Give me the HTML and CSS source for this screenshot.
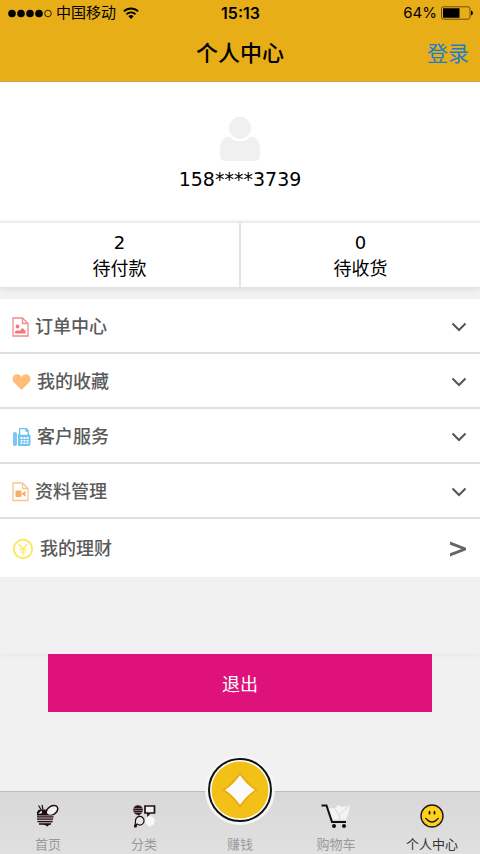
FILE: index.html
```html
<!DOCTYPE html>
<html lang="zh-CN">
<head>
<meta charset="utf-8">
<meta name="viewport" content="width=device-width, initial-scale=1">
<title>个人中心</title>
<link rel="stylesheet" href="styles.css">
</head>
<body>
<div class="app">
  <header class="header">
    <div class="status">
      <div class="status-left">
        <svg width="44" height="9" viewBox="0 0 44 9" aria-hidden="true">
          <circle cx="4" cy="4.5" r="3.8"/><circle cx="13" cy="4.5" r="3.8"/><circle cx="22" cy="4.5" r="3.8"/><circle cx="31" cy="4.5" r="3.8"/>
          <circle cx="40" cy="4.5" r="3.3" fill="none" stroke="#000" stroke-width=".8"/>
        </svg>
        <span>中国移动</span>
        <svg class="wifi" width="16" height="12" viewBox="0 0 16 12" aria-hidden="true">
          <g fill="none" stroke="#000" stroke-width="1.9"><path d="M.9 4.400a10.200 10.200 0 0 1 14.200 0"/><path d="M3.500 7.200a6.400 6.400 0 0 1 9 0"/></g>
          <path d="M8 12 5.400 9.300a3.700 3.700 0 0 1 5.200 0z"/>
        </svg>
      </div>
      <span class="status-time">15:13</span>
      <div class="status-right">
        <span>64%</span>
        <svg width="32" height="14" viewBox="0 0 32 14" aria-hidden="true">
          <rect x=".5" y=".8" width="28.500" height="12.400" rx="2" fill="none" stroke="#6b4a18"/>
          <path d="M2 2.300h16.500v9.400H2zM30 4.500q2 .6 2 2.500t-2 2.500z"/>
        </svg>
      </div>
    </div>
    <div class="titlebar">
      <h1 class="title">个人中心</h1>
      <a class="login" href="#login">登录</a>
    </div>
  </header>

  <main class="main">
    <section class="profile">
      <svg width="40" height="44" viewBox="0 0 40 44" fill="#f0f0f0" aria-hidden="true">
        <circle cx="20" cy="11" r="11"/>
        <path d="M9.500 19.500C3 20 0 25 0 32v6.500Q0 44 5.500 44h29q5.500 0 5.500-5.500V32c0-7-3-12-9.500-12.500C28 22.500 24 24 20 24s-8-1.500-10.500-4.500z"/>
      </svg>
      <p class="phone">158****3739</p>
    </section>

    <section class="stats">
      <a class="stat" href="#unpaid"><span>2</span><span>待付款</span></a>
      <a class="stat" href="#shipping"><span>0</span><span>待收货</span></a>
    </section>

    <nav class="menu">
      <button class="row" type="button">
        <svg width="17" height="20" viewBox="0 0 17 20" aria-hidden="true">
          <path d="M1 1h9.500L16 6.500V19H1zM10.500 1v5.500H16" fill="none" stroke="#f28b8b" stroke-width="1.300"/>
          <circle cx="5.500" cy="9.500" r="1.900" fill="#f27878"/><path d="M3 16.500v-2l3-1.500 1.500 1L10.500 11l3 3v2.500z" fill="#f27878"/>
        </svg>
        <span>订单中心</span>
        <svg class="chevron" width="16" height="10" viewBox="0 0 16 10" aria-hidden="true"><path d="m1.500 1.500 6.500 6.500 6.500-6.500"/></svg>
      </button>
      <button class="row" type="button">
        <svg width="19" height="18" viewBox="0 0 19 18" aria-hidden="true"><path fill="#ffbd78" d="M9.500 17 2 9.600C-.5 7 .4 1.500 5 1.200c2.300 0 3.600 1.300 4.500 3 .9-1.700 2.200-3 4.500-3 4.600.3 5.500 5.800 3 8.400z"/></svg>
        <span>我的收藏</span>
        <svg class="chevron" width="16" height="10" viewBox="0 0 16 10" aria-hidden="true"><path d="m1.500 1.500 6.500 6.500 6.500-6.500"/></svg>
      </button>
      <button class="row" type="button">
        <svg width="19" height="20" viewBox="0 0 19 20" aria-hidden="true">
          <rect x="1" y="5" width="4" height="14" rx="1.800" fill="#7ac8f2"/>
          <path fill="#72c3ef" d="M6 7h1V1h8l2 2.500V7q1.500.5 1.500 2v8q0 2-2 2H6z"/>
          <path fill="#fff" d="M8.300 2.200h5v2.500h2.300v3H8.300zM8.500 10h2v2h-2zm3 0h2v2h-2zm3 0h2v2h-2zm-6 3h2v1.500h-2zm3 0h2v1.500h-2zm3 0h2v1.500h-2zm-6 2.500h2V17h-2zm3 0h2V17h-2zm3 0h2V17h-2z"/>
        </svg>
        <span>客户服务</span>
        <svg class="chevron" width="16" height="10" viewBox="0 0 16 10" aria-hidden="true"><path d="m1.500 1.500 6.500 6.500 6.500-6.500"/></svg>
      </button>
      <button class="row" type="button">
        <svg width="17" height="20" viewBox="0 0 17 20" aria-hidden="true">
          <path d="M1 1h9.500L16 6.500V18.500H1zM10.500 1v5.500H16" fill="none" stroke="#fcc48e" stroke-width="1.300"/>
          <rect x="3.500" y="8.500" width="6" height="6.500" rx="1" fill="#f9ab69"/><path d="m9.500 11.800 4-3v6z" fill="#f9ab69"/>
        </svg>
        <span>资料管理</span>
        <svg class="chevron" width="16" height="10" viewBox="0 0 16 10" aria-hidden="true"><path d="m1.500 1.500 6.500 6.500 6.500-6.500"/></svg>
      </button>
      <a class="row" href="#finance">
        <svg width="22" height="22" viewBox="0 0 22 22" fill="none" stroke="#fae95c" aria-hidden="true">
          <circle cx="11" cy="11" r="9.200" stroke-width="1.900"/>
          <path stroke-width="1.200" d="m6.500 6 4.500 5 4.500-5M11 11v6.500M7.500 11.300h7M7.500 14h7"/>
        </svg>
        <span>我的理财</span>
        <svg class="arrow" width="18" height="16" viewBox="0 0 18 16" aria-hidden="true"><path d="M1 .5 17 6.700v2.600L1 15.500v-3.200L12.500 8 1 3.700z"/></svg>
      </a>
    </nav>

    <div class="spacer"></div>
    <button class="logout" type="button">退出</button>
  </main>

  <nav class="tabs">
    <a class="tab" href="#home">
      <svg width="24" height="24" viewBox="0 0 24 24" aria-hidden="true">
        <path fill="#1c1014" d="M1 12V8q1-2.500 4-2.700L13 6l1 5-3 1z"/>
        <path d="m2.500 1.500 2.500 4M6 1l1 4.500" stroke="#1c1014" stroke-width="1.200" fill="none"/>
        <ellipse cx="16" cy="6.500" rx="6.300" ry="4.200" transform="rotate(-32 16 6.500)" fill="#f3f0f1" stroke="#1c1014" stroke-width="1.500"/>
        <path d="M2.200 9.800 5.500 6.500l.5 2.800z" fill="#fff"/>
        <path d="M1 11.500h16.500l-.5 6-2 2.500-5 .5-1 0H4l-2.500-3z" fill="#cdb9bd"/>
        <path d="M1 12.800h16.500M1 15.200h16M1.500 17.600h15M3 20h12" stroke="#1c1014" stroke-width="1.300"/>
        <path d="M7 20h7l-2.500 2.500z" fill="#1c1014"/>
      </svg>
      <span>首页</span>
    </a>
    <a class="tab" href="#category">
      <svg width="24" height="24" viewBox="0 0 24 24" aria-hidden="true">
        <circle cx="6" cy="6" r="4.800" fill="#2a171c"/><path d="M5 10h3l-1 2z" fill="#2a171c"/><path d="M1.500 4.500h9M1.200 6.500h9.600M2 8.500h8" stroke="#a08c90" stroke-width=".7"/>
        <path d="M13 2h9.500v7H18l-2 2v-2h-3z" fill="#f2eeee" stroke="#1c1014" stroke-width="1.700"/>
        <path d="m5 20-2 2 .5-4.500A4.300 4.300 0 1 1 7 21z" fill="#e8e6e6" stroke="#1c1014" stroke-width="1.200"/><circle cx="3.500" cy="22" r="1.600" fill="#1c1014"/>
        <circle cx="18" cy="17" r="4.800" fill="#f7f7f7"/><path d="m16 21 2 2.500 1-2.500z" fill="#f7f7f7"/>
      </svg>
      <span>分类</span>
    </a>
    <a class="tab" href="#earn">
      <svg class="coin" width="72" height="72" viewBox="0 0 72 72" aria-hidden="true">
        <circle cx="36" cy="36" r="35" fill="#f5f5f5"/>
        <circle cx="36" cy="36" r="31" fill="#fff" stroke="#111" stroke-width="2"/>
        <circle cx="36" cy="36" r="28.500" fill="#f3c017"/>
        <path d="M36 18q7 11 18 18Q43 43 36 54 29 43 18 36 29 29 36 18z" fill="#eda711"/>
        <path d="M36 21q6 9 15 15-9 6-15 15-6-9-15-15 9-6 15-15z" fill="#fafafa"/>
      </svg>
      <span>赚钱</span>
    </a>
    <a class="tab" href="#cart">
      <svg width="30" height="24" viewBox="0 0 30 24" aria-hidden="true">
        <path d="m7 4 7 .5L17 1l4 2 8-1-2 8-2 5.500H12z" fill="#f4f4f4"/><path d="m14 5 4 6 9-8M18 11l1 4" fill="none" stroke="#d8d8d8"/>
        <path d="M.5 1.500h5L11 18h14" fill="none" stroke="#150e10" stroke-width="2"/>
        <circle cx="13" cy="22" r="2" fill="#150e10"/><circle cx="23" cy="22" r="2" fill="#150e10"/>
      </svg>
      <span>购物车</span>
    </a>
    <a class="tab active" href="#me">
      <svg width="24" height="24" viewBox="0 0 24 24" aria-hidden="true">
        <circle cx="12" cy="12" r="11" fill="#fdd21c" stroke="#231815" stroke-width="1.400"/>
        <ellipse cx="9.500" cy="8.800" rx="1" ry="2" fill="#231815"/><ellipse cx="14.500" cy="8.800" rx="1" ry="2" fill="#231815"/>
        <path d="M5.500 14q6.500 8 13 0" fill="none" stroke="#231815" stroke-width="1.300"/>
      </svg>
      <span>个人中心</span>
    </a>
  </nav>
</div>
</body>
</html>
```
FILE: styles.css
```css
* {
  box-sizing: border-box;
}

body {
  margin: 0;
  background: #f1f1f1;
  color: #000;
  font-family: "Liberation Sans", "Noto Sans CJK SC", sans-serif;
}

a {
  color: inherit;
  text-decoration: none;
}

button {
  border: 0;
  margin: 0;
  font: inherit;
}

svg {
  flex: none;
}

.app {
  display: flex;
  flex-direction: column;
  min-height: 100vh;
}

.header {
  background: #e8ae17;
  border-bottom: 1px solid #c9a54a;
}

.status {
  display: grid;
  grid-template-columns: 1fr auto 1fr;
  align-items: center;
  height: 26px;
  padding: 0 7px 0 8px;
  font-family: Inter, "Noto Sans CJK SC", sans-serif;
  font-size: 15px;
  line-height: 20px;
}

.status-left,
.status-right {
  display: flex;
  align-items: center;
  gap: 4px;
}

.wifi {
  margin-left: 3px;
}

.status-right {
  justify-content: flex-end;
}

.status-time {
  font-size: 16px;
  font-weight: 600;
}

.titlebar {
  display: grid;
  grid-template-columns: 1fr auto 1fr;
  align-items: center;
  height: 55px;
  padding: 0 11px;
  font-size: 21px;
  line-height: 30px;
}

.title {
  grid-column: 2;
  margin: 0;
  font-size: 22px;
  font-weight: 500;
}

.login {
  justify-self: end;
  color: #1c7dcd;
}

.main {
  display: flex;
  flex: 1;
  flex-direction: column;
}

.profile {
  display: flex;
  flex-direction: column;
  align-items: center;
  gap: 6px;
  padding: 35px 0 30px;
  background: #fff;
}

.phone {
  margin: 0;
  font-family: "DejaVu Sans", sans-serif;
  font-size: 19px;
  line-height: 24px;
}

.stats {
  display: grid;
  grid-template-columns: 1fr 1fr;
  gap: 2px;
  margin-bottom: 12px;
  border-top: 2px solid #ececec;
  background: #e4e4e4;
  box-shadow: 0 2px 5px #dcdcdc;
}

.stat {
  display: flex;
  flex-direction: column;
  align-items: center;
  padding: 7px 0 5px;
  background: #fff;
  font-family: "DejaVu Sans", "Noto Sans CJK SC", sans-serif;
  font-size: 18px;
  line-height: 26px;
}

.menu {
  background: #fff;
}

.row {
  display: flex;
  align-items: center;
  gap: 6px;
  width: 100%;
  height: 55px;
  padding: 2px 13px 0 12px;
  border-bottom: 2px solid #dfdfdf;
  background: #fff;
  color: #5a5a5a;
  font-size: 18px;
  font-weight: 500;
  line-height: 26px;
  text-align: left;
}

.row:last-child {
  height: 58px;
  border-bottom: 0;
}

.chevron,
.arrow {
  margin-left: auto;
  fill: none;
  stroke: #555;
  stroke-width: 2;
}

.arrow {
  fill: #666;
  stroke: none;
}

.spacer {
  height: 77px;
  box-shadow: 0 2px 4px #e9e9e9;
}

.logout {
  position: relative;
  height: 58px;
  margin: 0 10%;
  background: #de127a;
  color: #fff;
  font-size: 18px;
}

.tabs {
  display: grid;
  grid-template-columns: repeat(5, 1fr);
  height: 63px;
  border-top: 1px solid #bdbdbd;
  background: linear-gradient(#d8d8d8, #e0e0e0);
  color: #999;
  font-size: 13px;
  line-height: 18px;
}

.tab {
  position: relative;
  display: flex;
  flex-direction: column;
  align-items: center;
  justify-content: flex-end;
  gap: 8px;
}

.active {
  color: #333;
}

.coin {
  position: absolute;
  top: -38px;
}
```
